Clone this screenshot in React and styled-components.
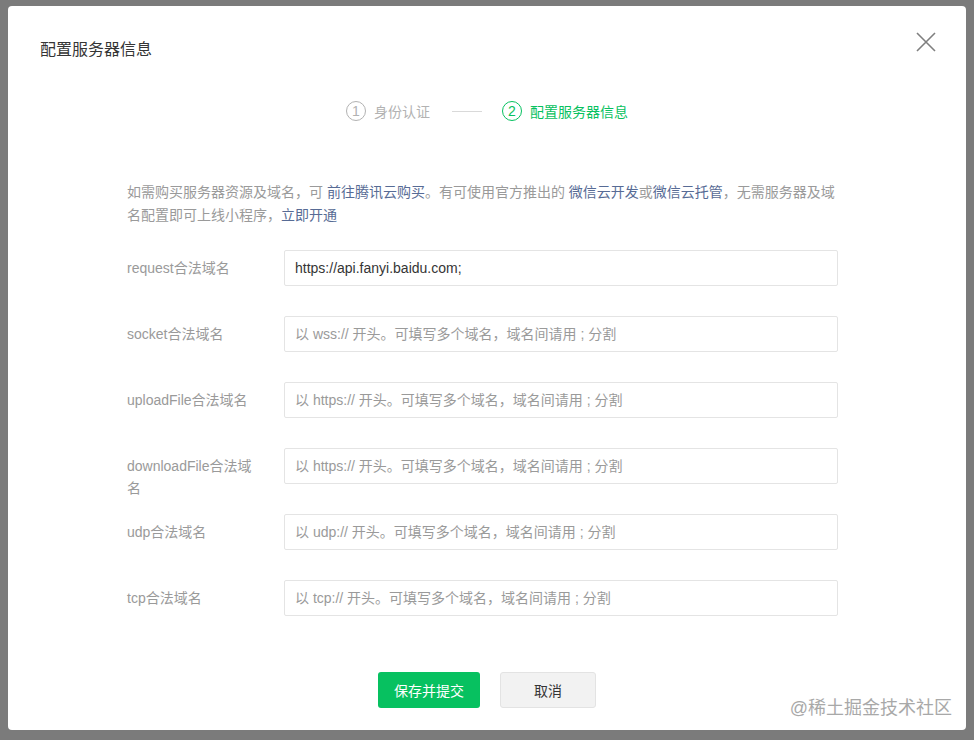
import React from 'react';
import styled, { createGlobalStyle } from 'styled-components';

const GlobalStyle = createGlobalStyle`
  html, body {
    margin: 0;
    padding: 0;
  }
  body {
    font-family: "Liberation Sans", "Noto Sans CJK SC", sans-serif;
  }
`;

const fields = [
  { label: 'request合法域名', value: 'https://api.fanyi.baidu.com;' },
  { label: 'socket合法域名', placeholder: '以 wss:// 开头。可填写多个域名，域名间请用 ; 分割' },
  { label: 'uploadFile合法域名', placeholder: '以 https:// 开头。可填写多个域名，域名间请用 ; 分割' },
  { label: 'downloadFile合法域名', placeholder: '以 https:// 开头。可填写多个域名，域名间请用 ; 分割' },
  { label: 'udp合法域名', placeholder: '以 udp:// 开头。可填写多个域名，域名间请用 ; 分割' },
  { label: 'tcp合法域名', placeholder: '以 tcp:// 开头。可填写多个域名，域名间请用 ; 分割' },
];

const App = () => {
  return (
    <>
      <GlobalStyle />
      <Backdrop>
        <Dialog>
          <Header>
            <Title>配置服务器信息</Title>
            <CloseButton aria-label="关闭">
              <svg width="20" height="20" viewBox="0 0 20 20">
                <path d="M1 1 L19 19 M19 1 L1 19" stroke="#7f7f7f" strokeWidth="1.6" fill="none" />
              </svg>
            </CloseButton>
          </Header>

          <Steps>
            <Step>
              <StepNum>1</StepNum>
              <StepText>身份认证</StepText>
            </Step>
            <StepLine />
            <Step $active>
              <StepNum $active>2</StepNum>
              <StepText>配置服务器信息</StepText>
            </Step>
          </Steps>

          <Body>
            <Tips>
              如需购买服务器资源及域名，可 <Link>前往腾讯云购买</Link>。有可使用官方推出的 <Link>微信云开发</Link>或<Link>微信云托管</Link>，无需服务器及域名配置即可上线小程序，<Link>立即开通</Link>
            </Tips>

            <Form>
              {fields.map((f) => (
                <Row key={f.label}>
                  <Label>{f.label}</Label>
                  <Input defaultValue={f.value} placeholder={f.placeholder} />
                </Row>
              ))}
            </Form>
          </Body>

          <Footer>
            <PrimaryButton>保存并提交</PrimaryButton>
            <DefaultButton>取消</DefaultButton>
          </Footer>

          <Watermark>@稀土掘金技术社区</Watermark>
        </Dialog>
      </Backdrop>
    </>
  );
};
export default App;

const Backdrop = styled.div`
  background: #7b7b7b;
  height: 740px;
  padding: 6px 8px 0;
  box-sizing: border-box;
  overflow: hidden;
`;

const Dialog = styled.div`
  position: relative;
  background: #fff;
  width: 958px;
  height: 724px;
  border-radius: 4px;
  box-sizing: border-box;
  display: flex;
  flex-direction: column;
`;

const Header = styled.div`
  display: flex;
  justify-content: space-between;
  align-items: center;
  padding: 32px 30px 0 32px;
  height: 24px;
`;

const Title = styled.h3`
  margin: 0;
  font-size: 16px;
  font-weight: 400;
  color: #353535;
  line-height: 24px;
`;

const CloseButton = styled.button`
  border: none;
  background: none;
  padding: 0;
  width: 20px;
  height: 20px;
  cursor: pointer;
  margin-top: -16px;
`;

const Steps = styled.div`
  display: flex;
  justify-content: center;
  align-items: center;
  margin-top: 37px;
  height: 24px;
`;

const Step = styled.div`
  display: flex;
  align-items: center;
  gap: 8px;
  color: ${({ $active }) => ($active ? '#07c160' : '#b2b2b2')};
`;

const StepNum = styled.span`
  width: 18px;
  height: 18px;
  border-radius: 50%;
  border: 1px solid ${({ $active }) => ($active ? '#07c160' : '#b2b2b2')};
  display: flex;
  align-items: center;
  justify-content: center;
  font-size: 14px;
  line-height: 1;
`;

const StepText = styled.span`
  font-size: 14px;
`;

const StepLine = styled.span`
  width: 30px;
  height: 1px;
  background: #d9d9d9;
  margin: 0 20px 0 22px;
`;

const Body = styled.div`
  padding: 58px 128px 0 119px;
`;

const Tips = styled.p`
  margin: 0;
  font-size: 14px;
  line-height: 23px;
  color: #9a9a9a;
`;

const Link = styled.a`
  color: #576b95;
  cursor: pointer;
`;

const Form = styled.div`
  margin-top: 23px;
  display: flex;
  flex-direction: column;
  gap: 30px;
`;

const Row = styled.div`
  display: flex;
  align-items: flex-start;
  height: 36px;
`;

const Label = styled.label`
  width: 137px;
  margin-right: 20px;
  font-size: 14px;
  line-height: 22px;
  padding-top: 7px;
  color: #9a9a9a;
  word-break: break-all;
`;

const Input = styled.input`
  flex: 1;
  height: 36px;
  box-sizing: border-box;
  border: 1px solid #e4e4e4;
  border-radius: 2px;
  padding: 0 10px;
  font-family: inherit;
  font-size: 14px;
  color: #353535;
  outline: none;
  &::placeholder {
    color: #9a9a9a;
  }
`;

const Footer = styled.div`
  margin-top: auto;
  margin-bottom: 22px;
  display: flex;
  justify-content: center;
  gap: 20px;
`;

const PrimaryButton = styled.button`
  width: 102px;
  height: 36px;
  border: none;
  border-radius: 3px;
  background: #07c160;
  color: #fff;
  font-family: inherit;
  font-size: 14px;
  cursor: pointer;
`;

const DefaultButton = styled.button`
  width: 96px;
  height: 36px;
  border: 1px solid #e3e3e3;
  border-radius: 3px;
  background: #f2f2f2;
  color: #353535;
  font-family: inherit;
  font-size: 14px;
  cursor: pointer;
`;

const Watermark = styled.span`
  position: absolute;
  right: 14px;
  bottom: 11px;
  font-size: 18px;
  color: #9a9a9a;
  opacity: 0.85;
`;
